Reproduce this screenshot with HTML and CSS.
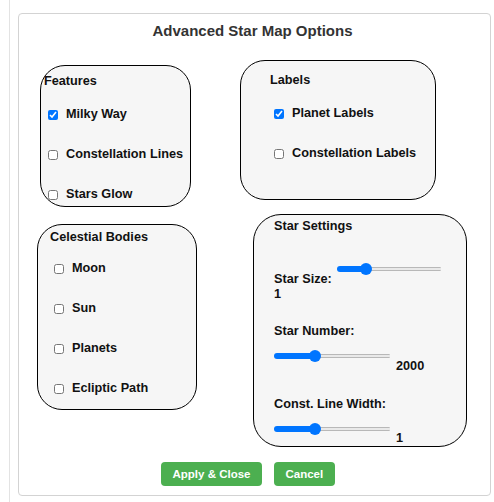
FILE: index.html
```html
<!DOCTYPE html>
<html>
<head>
<meta charset="utf-8">
<link rel="stylesheet" href="styles.css">
</head>
<body>
<div class="page">
  <div class="panel">
    <h2 class="title">Advanced Star Map Options</h2>
    <div class="row row-top">
      <div class="box features">
        <h3 class="box-title">Features</h3>
        <label class="item"><input class="check" type="checkbox" checked>Milky Way</label>
        <label class="item"><input class="check" type="checkbox">Constellation Lines</label>
        <label class="item"><input class="check" type="checkbox">Stars Glow</label>
      </div>
      <div class="box labels">
        <h3 class="box-title">Labels</h3>
        <label class="item"><input class="check" type="checkbox" checked>Planet Labels</label>
        <label class="item"><input class="check" type="checkbox">Constellation Labels</label>
      </div>
    </div>
    <div class="row row-bottom">
      <div class="box bodies">
        <h3 class="box-title">Celestial Bodies</h3>
        <label class="item"><input class="check" type="checkbox">Moon</label>
        <label class="item"><input class="check" type="checkbox">Sun</label>
        <label class="item"><input class="check" type="checkbox">Planets</label>
        <label class="item"><input class="check" type="checkbox">Ecliptic Path</label>
      </div>
      <div class="box stars">
        <h3 class="box-title">Star Settings</h3>
        <div class="size-row">
          <span class="setting-label">Star Size:</span>
          <input class="slider slider-short" type="range" min="0" max="4" step="0.1" value="1" style="--p:27.9%">
        </div>
        <div class="value">1</div>
        <div class="setting-label number-label">Star Number:</div>
        <div class="slider-row">
          <input class="slider" type="range" min="0" max="6000" value="2000" style="--p:35.1%">
          <span class="value row-value">2000</span>
        </div>
        <div class="setting-label const-label">Const. Line Width:</div>
        <div class="slider-row last">
          <input class="slider" type="range" min="0" max="3" step="0.1" value="1" style="--p:35.1%">
          <span class="value row-value">1</span>
        </div>
      </div>
    </div>
    <div class="actions">
      <button class="btn">Apply &amp; Close</button>
      <button class="btn">Cancel</button>
    </div>
  </div>
</div>
</body>
</html>
```
FILE: styles.css
```css
body {
  margin: 0;
  background: #fff;
  font-family: "Liberation Sans", Arial, sans-serif;
  color: #222;
}
.page {
  margin-left: 9px;
  border-left: 1px solid #e3e3e3;
  min-height: 502px;
  box-sizing: border-box;
  padding: 13px 0 0 8px;
}
.panel {
  width: 473px;
  height: 483px;
  box-sizing: border-box;
  border: 1px solid #d3d3d3;
  border-radius: 4px;
  background: #fff;
}
.title {
  margin: 7.5px 0 0;
  padding-right: 4px;
  text-align: center;
  font-size: 15px;
  line-height: 17px;
  font-weight: bold;
  color: #333;
}
.row {
  display: flex;
  align-items: flex-start;
}
.row-top {
  margin-top: 21.5px;
}
.box {
  box-sizing: border-box;
  border: 1px solid #000;
  border-radius: 25px;
  background: #f6f6f6;
  font-size: 12.7px;
  line-height: 15px;
  font-weight: bold;
  color: #111;
}
.box-title {
  margin: 0;
  font-size: 12.7px;
  line-height: 15px;
  font-weight: bold;
}
.features {
  margin: 5px 0 0 21px;
  width: 151px;
  height: 142px;
  padding: 7.5px 0 0 3px;
}
.labels {
  margin-left: 49px;
  width: 196px;
  height: 140px;
  padding: 11.5px 0 0 29px;
}
.bodies {
  margin: 17px 0 0 18px;
  width: 160px;
  height: 186px;
  padding: 4.5px 0 0 12px;
}
.stars {
  margin: 7px 0 0 56px;
  width: 214px;
  height: 233px;
  padding: 3.5px 0 0 20px;
  border-radius: 28px;
}
.item {
  display: flex;
  align-items: center;
  height: 15px;
  margin-top: 25px;
}
.box-title + .item {
  margin-top: 18px;
}
.bodies .box-title + .item {
  margin-top: 16px;
}
.check {
  width: 10px;
  height: 10px;
  margin: 1px 8.5px 0 3.5px;
  flex: none;
}
.size-row,
.slider-row {
  display: flex;
  align-items: flex-start;
}
.size-row .setting-label {
  width: 63px;
  flex: none;
  margin-top: 38px;
}
.size-row .slider {
  margin-top: 29.5px;
}
.number-label {
  margin-top: 22px;
}
.const-label {
  margin-top: 23px;
}
.slider-row .slider {
  margin-top: 11.5px;
}
.row-value {
  margin: 20px 0 0 6px;
}
.slider-row.last .row-value {
  margin-top: 19px;
}
.slider {
  -webkit-appearance: none;
  appearance: none;
  display: block;
  flex: none;
  width: 116px;
  height: 12px;
  margin: 0;
  padding: 0;
  background: transparent;
}
.slider-short {
  width: 104px;
}
.slider::-webkit-slider-runnable-track {
  height: 6px;
  border-radius: 3px;
  background:
    linear-gradient(to right, #0075ff 0 var(--p), transparent var(--p)),
    linear-gradient(to bottom, transparent 0 1px, #b8b8b8 1px 2px, #e9e9e9 2px 4px, #b8b8b8 4px 5px, transparent 5px);
}
.slider::-webkit-slider-thumb {
  -webkit-appearance: none;
  appearance: none;
  width: 12px;
  height: 12px;
  margin-top: -3px;
  border: none;
  border-radius: 50%;
  background: #0075ff;
}
.actions {
  display: flex;
  gap: 12px;
  margin: 15px 0 0 142px;
}
.btn {
  height: 24px;
  padding: 0 11.5px;
  border: none;
  border-radius: 4px;
  background: #4caf50;
  color: #fff;
  font: bold 11.5px/24px "Liberation Sans", Arial, sans-serif;
}
```
